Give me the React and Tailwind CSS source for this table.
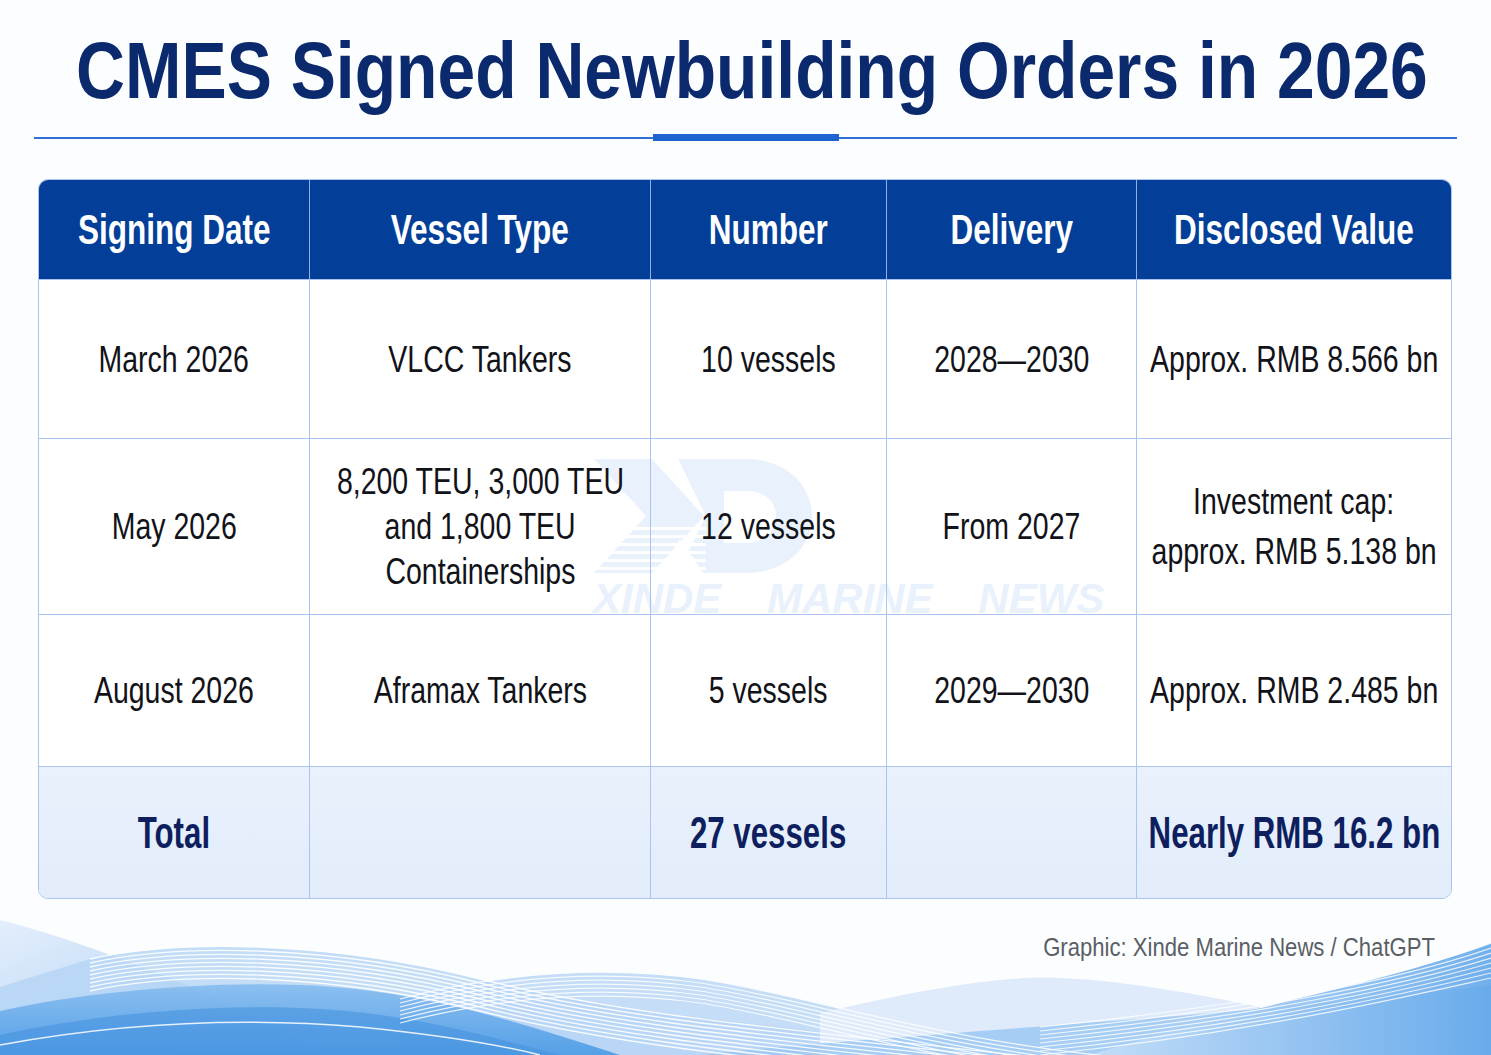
const SANS = { fontFamily: '"Liberation Sans", Arial, sans-serif' };

const HEAD = ['Signing Date', 'Vessel Type', 'Number', 'Delivery', 'Disclosed Value'];

const ROWS = [
  { h: 'h-[158px]', cells: [['March 2026'], ['VLCC Tankers'], ['10 vessels'], ['2028—2030'], ['Approx. RMB 8.566 bn']] },
  {
    h: 'h-[175px]',
    cells: [
      ['May 2026'],
      ['8,200 TEU, 3,000 TEU', 'and 1,800 TEU', 'Containerships'],
      ['12 vessels'],
      ['From 2027'],
      ['Investment cap:', 'approx. RMB 5.138 bn'],
    ],
  },
  { h: 'h-[151px]', cells: [['August 2026'], ['Aframax Tankers'], ['5 vessels'], ['2029—2030'], ['Approx. RMB 2.485 bn']] },
];

const TOTAL = ['Total', '', '27 vessels', '', 'Nearly RMB 16.2 bn'];

function Logo() {
  return (
    <svg width="232" height="126" viewBox="0 0 232 126" className="absolute left-[547px] top-[273px]">
      <path d="M8 6 H66 L118 63 L66 120 H8 L60 63 Z" fill="#e9f2fc" />
      <path d="M92 6 H160 C200 6 226 32 226 63 C226 94 200 120 160 120 H92 L120 63 Z M138 38 V90 H160 C178 90 190 78 190 63 C190 48 178 38 160 38 Z" fill="#e9f2fc" fillRule="evenodd" />
      <path d="M70 124 L94 86 L120 124 Z" fill="#ffffff" />
      {[74, 82, 90, 98, 106, 114].map((y) => (
        <rect key={y} x="0" y={y} width="120" height="3" fill="#ffffff" />
      ))}
    </svg>
  );
}

function Waves() {
  return (
    <svg className="absolute left-0 bottom-0 z-0" width="1491" height="160" viewBox="0 0 1491 160" preserveAspectRatio="none">
      <defs>
        <linearGradient id="wl" x1="0" y1="0" x2="0" y2="1">
          <stop offset="0" stopColor="#86bcef" />
          <stop offset="1" stopColor="#4a9ae5" />
        </linearGradient>
        <linearGradient id="wr" x1="0" y1="0" x2="1" y2="0">
          <stop offset="0" stopColor="#c6dff8" />
          <stop offset="1" stopColor="#62a7ea" />
        </linearGradient>
        <linearGradient id="wp" x1="0" y1="0" x2="1" y2="1">
          <stop offset="0" stopColor="#e4eefc" />
          <stop offset="1" stopColor="#a3cbf3" />
        </linearGradient>
      </defs>
      <path d="M0 25 C60 40 110 60 150 75 C200 95 250 115 320 160 L0 160 Z" fill="url(#wp)" />
      <path d="M90 64 C180 44 330 46 480 84 C620 118 800 135 1060 162 L0 162 L0 92 Z" fill="#b4d4f5" opacity="0.8" />
      <path d="M400 104 C500 78 600 70 700 84 C820 102 950 150 1150 165 L400 165 Z" fill="#b6d5f5" opacity="0.8" />
      <path d="M820 118 C920 95 1000 80 1060 83 C1130 86 1200 100 1260 112 L1260 160 L820 160 Z" fill="#dfebfb" />
      <path d="M700 160 C900 138 1200 125 1491 90 L1491 160 Z" fill="#9cc8f2" opacity="0.85" />
      <path d="M1090 160 C1250 110 1380 90 1491 48 L1491 160 Z" fill="url(#wr)" opacity="0.9" />
      <path d="M0 116 C80 98 200 86 300 90 C420 94 520 128 620 160 L0 160 Z" fill="url(#wl)" opacity="0.9" />
      <path d="M0 140 C100 118 220 108 320 114 C420 120 500 145 560 160 L0 160 Z" fill="#4693e0" opacity="0.6" />
      {[0, 1, 2, 3, 4, 5, 6, 7, 8].map((i) => (
        <path
          key={'a' + i}
          d={`M90 ${64 + i * 4} C180 ${44 + i * 4} 330 ${46 + i * 4} 480 ${84 + i * 4} S800 ${135 + i * 4} 1060 ${165 + i * 4}`}
          fill="none"
          stroke="#ffffff"
          strokeWidth="1.3"
          opacity="0.9"
        />
      ))}
      {[0, 1, 2, 3, 4, 5, 6].map((i) => (
        <path
          key={'b' + i}
          d={`M400 ${104 + i * 4} C500 ${78 + i * 4} 600 ${70 + i * 4} 700 ${84 + i * 4} S950 ${150 + i * 4} 1150 ${165 + i * 4}`}
          fill="none"
          stroke="#ffffff"
          strokeWidth="1.2"
          opacity="0.85"
        />
      ))}
      {[0, 1, 2, 3, 4, 5, 6, 7].map((i) => (
        <path
          key={'c' + i}
          d={`M1040 ${132 + i * 4} C1250 ${110 + i * 4} 1400 ${82 + i * 3} 1491 ${48 + i * 5}`}
          fill="none"
          stroke="#ffffff"
          strokeWidth="1.2"
          opacity="0.8"
        />
      ))}
      <path d="M0 150 C120 128 240 122 360 132 C440 140 500 150 540 160" fill="none" stroke="#ffffff" strokeWidth="1.5" opacity="0.85" />
    </svg>
  );
}

export default function App() {
  const cols = 'grid grid-cols-[270px_341px_236px_250px_minmax(0,1fr)]';

  return (
    <div className="relative w-[1491px] h-[1055px] overflow-hidden bg-[#fcfdfe]" style={SANS}>
      <Waves />
      <div className="relative z-10">
        <h1 className="pt-[31px] flex justify-center text-[80px] font-bold leading-none text-[#0b2a6d]">
          <span className="inline-block whitespace-nowrap scale-x-[0.847] translate-x-[6px]">CMES Signed Newbuilding Orders in 2026</span>
        </h1>

        <div className="relative mx-[34px] mt-[23px] h-[7px] flex items-center">
          <div className="h-[2px] w-full bg-[#2f6fd8]" />
          <div className="absolute left-1/2 top-0 h-[7px] w-[186px] -translate-x-1/2 bg-[#1f63d0]" />
        </div>

        <div className="relative ml-[38px] mt-[38px] w-[1414px] overflow-hidden rounded-[10px] border border-[#a9c4ee] bg-white">
          <Logo />
          <div className="absolute left-[554px] top-[398px] text-[42px] font-bold italic leading-none text-[#e9f1fc] [word-spacing:34px]">
            XINDE MARINE NEWS
          </div>

          <div className={`relative ${cols} bg-[#033f99]`}>
            {HEAD.map((h, i) => (
              <div
                key={h}
                className={`h-[99px] min-w-0 flex items-center justify-center text-[42px] font-bold text-white ${i ? 'border-l border-[#8fb0e3]' : ''}`}
              >
                <span className="inline-block whitespace-nowrap scale-x-[0.75]">{h}</span>
              </div>
            ))}
          </div>

          {ROWS.map((r, ri) => (
            <div key={ri} className={`relative ${cols} border-t border-[#a9c4ee]`}>
              {r.cells.map((lines, i) => (
                <div
                  key={i}
                  className={`${r.h} min-w-0 flex flex-col items-center justify-center text-center text-[37px] text-[#111318] ${
                    lines.length === 2 ? 'leading-[50px]' : 'leading-[45px]'
                  } ${i ? 'border-l border-[#a9c4ee]' : ''}`}
                >
                  {lines.map((l) => (
                    <span key={l} className="inline-block whitespace-nowrap scale-x-[0.77]">
                      {l}
                    </span>
                  ))}
                </div>
              ))}
            </div>
          ))}

          <div className={`relative ${cols} border-t border-[#a9c4ee] bg-gradient-to-b from-[#e9f1fc] to-[#e2ecfa]`}>
            {TOTAL.map((t, i) => (
              <div
                key={i}
                className={`h-[131px] min-w-0 flex items-center justify-center text-[44px] font-bold text-[#0d1f5e] ${i ? 'border-l border-[#a9c4ee]' : ''}`}
              >
                <span className="inline-block whitespace-nowrap scale-x-[0.71]">{t}</span>
              </div>
            ))}
          </div>
        </div>

        <div className="mt-[35px] pr-[56px] flex justify-end text-[26px] leading-none text-[#5a5f66]">
          <span className="inline-block whitespace-nowrap origin-right scale-x-[0.85]">Graphic: Xinde Marine News / ChatGPT</span>
        </div>
      </div>
    </div>
  );
}
